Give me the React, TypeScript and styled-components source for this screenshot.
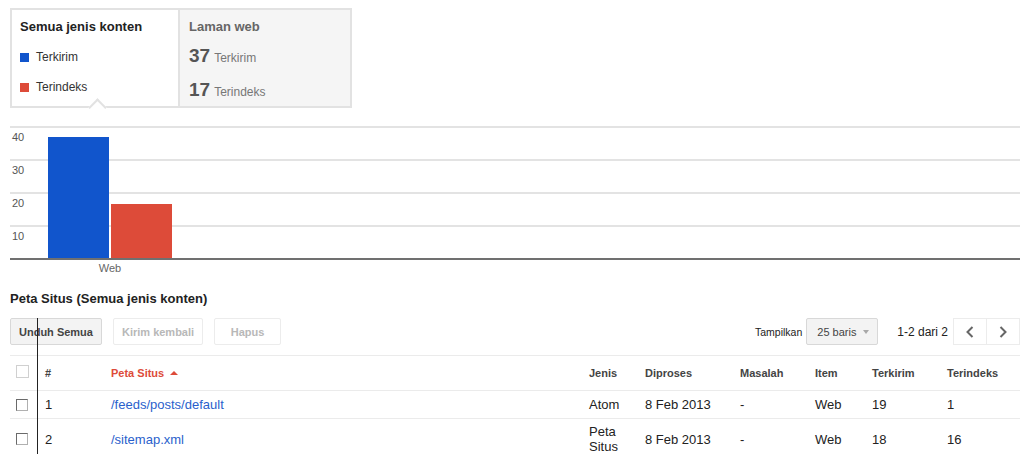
import React from 'react';
import styled, { createGlobalStyle } from 'styled-components';

const GlobalStyle = createGlobalStyle`
    body {
        margin: 0;
        background: #ffffff;
        color: #222222;
        font-family: 'Liberation Sans', Arial, sans-serif;
    }
`;

const Page = styled.div`
    position: relative;
    padding: 8px 4px 0 10px;
    height: 446px;
    overflow: hidden;
`;

const Summary = styled.div`
    display: flex;
    width: 342px;
    height: 100px;
    box-sizing: border-box;
    border: 2px solid #e2e2e2;
`;

const SummaryPanel = styled.div<{ $muted?: boolean }>`
    position: relative;
    display: flex;
    flex-direction: column;
    box-sizing: border-box;
    width: ${p => (p.$muted ? '170px' : '168px')};
    padding: 9px 0 0 ${p => (p.$muted ? '9px' : '8px')};
    background: ${p => (p.$muted ? '#f5f5f5' : '#ffffff')};
    border-right: ${p => (p.$muted ? 'none' : '2px solid #e2e2e2')};
`;

const PanelTitle = styled.div<{ $muted?: boolean }>`
    font-size: 13px;
    line-height: 16px;
    font-weight: bold;
    color: ${p => (p.$muted ? '#666666' : '#222222')};
`;

const LegendRow = styled.div`
    display: flex;
    align-items: center;
    gap: 7px;
    margin-top: 14px;
    font-size: 12px;
    line-height: 16px;
    color: #333333;
`;

const Swatch = styled.span<{ $color: string }>`
    width: 9px;
    height: 9px;
    background: ${p => p.$color};
`;

const Caret = styled.span`
    position: absolute;
    left: 79px;
    bottom: -8px;
    width: 13px;
    height: 13px;
    box-sizing: border-box;
    background: #ffffff;
    border-top: 2px solid #e2e2e2;
    border-left: 2px solid #e2e2e2;
    transform: rotate(45deg);
`;

const StatRow = styled.div<{ $first?: boolean }>`
    display: flex;
    align-items: baseline;
    gap: 4px;
    margin-top: ${p => (p.$first ? '10px' : '10px')};
    line-height: 22px;
`;

const StatNum = styled.span`
    font-size: 19px;
    font-weight: bold;
    color: #555555;
`;

const StatLabel = styled.span`
    font-size: 12px;
    color: #777777;
`;

const ChartSvg = styled.svg`
    display: block;
    margin-top: 12px;
    font-family: 'Liberation Sans', Arial, sans-serif;
`;

const SectionTitle = styled.h2`
    margin: 15px 0 0;
    font-size: 13px;
    line-height: 16px;
    font-weight: bold;
    color: #222222;
`;

const Toolbar = styled.div`
    display: flex;
    align-items: center;
    gap: 11px;
    margin-top: 11px;
    height: 27px;
`;

const Button = styled.div<{ $disabled?: boolean }>`
    display: flex;
    align-items: center;
    justify-content: center;
    box-sizing: border-box;
    height: 27px;
    min-width: 67px;
    padding: 0 8px;
    border-radius: 2px;
    font-size: 11px;
    font-weight: bold;
    color: ${p => (p.$disabled ? '#b8b8b8' : '#444444')};
    background: ${p => (p.$disabled ? '#ffffff' : '#f3f3f3')};
    border: 1px solid ${p => (p.$disabled ? '#ececec' : '#d8d8d8')};
`;

const RightTools = styled.div`
    display: flex;
    align-items: center;
    margin-left: auto;
`;

const ShowLabel = styled.span`
    font-size: 10.5px;
    color: #222222;
    margin-right: 4px;
`;

const Select = styled.div`
    display: flex;
    align-items: center;
    box-sizing: border-box;
    width: 72px;
    height: 27px;
    padding: 0 0 0 10px;
    border-radius: 2px;
    border: 1px solid #d8d8d8;
    background: #f3f3f3;
    font-size: 11px;
    color: #444444;
`;

const SelectArrow = styled.span`
    margin-left: 7px;
    border-left: 3px solid transparent;
    border-right: 3px solid transparent;
    border-top: 4px solid #a8a8a8;
`;

const PageInfo = styled.span`
    margin: 0 5px 0 19px;
    font-size: 12px;
    color: #222222;
`;

const PagerGroup = styled.div`
    display: flex;
`;

const PagerButton = styled.div`
    display: flex;
    align-items: center;
    justify-content: center;
    box-sizing: border-box;
    width: 34px;
    height: 27px;
    border: 1px solid #ececec;
    background: #ffffff;
    & + & {
        margin-left: -1px;
    }
`;

const Table = styled.table`
    margin-top: 10px;
    width: 1010px;
    table-layout: fixed;
    border-collapse: collapse;
    font-size: 13px;
    color: #222222;
    tr {
        border-top: 1px solid #ebebeb;
    }
`;

const Th = styled.th<{ $active?: boolean }>`
    height: 34px;
    padding: 0;
    text-align: left;
    vertical-align: middle;
    font-size: 11px;
    font-weight: bold;
    color: ${p => (p.$active ? '#dd4b39' : '#444444')};
`;

const Td = styled.td<{ $tall?: boolean }>`
    height: ${p => (p.$tall ? '40px' : '27px')};
    padding: 0 8px 0 0;
    vertical-align: middle;
    line-height: 15px;
`;

const CheckCell = styled.td`
    padding: 0 0 0 6px;
    vertical-align: middle;
`;

const Checkbox = styled.span<{ $light?: boolean }>`
    display: block;
    box-sizing: border-box;
    width: ${p => (p.$light ? '13px' : '12px')};
    height: ${p => (p.$light ? '13px' : '12px')};
    margin-top: ${p => (p.$light ? '-4px' : '0')};
    border: 1px solid ${p => (p.$light ? '#d0d0d0' : '#6a6a6a')};
    border-right-color: ${p => (p.$light ? '#d0d0d0' : '#b0b0b0')};
    border-bottom-color: ${p => (p.$light ? '#d0d0d0' : '#b0b0b0')};
    background: #ffffff;
`;

const SortArrow = styled.span`
    display: inline-block;
    margin-left: 6px;
    vertical-align: 2px;
    border-left: 4px solid transparent;
    border-right: 4px solid transparent;
    border-bottom: 4px solid #dd4b39;
`;

const Link = styled.a`
    color: #2a5fcc;
    text-decoration: none;
`;

const CursorLine = styled.div`
    position: absolute;
    left: 37px;
    top: 318px;
    bottom: 0;
    width: 1px;
    background: #222222;
`;

const gridValues = [40, 30, 20, 10];

const Chart: React.FC = () => (
    <ChartSvg width={1010} height={156} viewBox='0 0 1010 156'>
        {gridValues.map((v, i) => (
            <g key={v}>
                <rect x={0} y={6 + i * 33} width={1010} height={2} fill='#e3e3e3' />
                <text x={2} y={21 + i * 33} fontSize={11} fill='#555555'>{v}</text>
            </g>
        ))}
        <rect x={38} y={17} width={61} height={122} fill='#1155cc' />
        <rect x={101} y={84} width={61} height={55} fill='#dd4b39' />
        <rect x={0} y={138} width={1010} height={2} fill='#707070' />
        <text x={100} y={152} fontSize={11} fill='#666666' textAnchor='middle'>Web</text>
    </ChartSvg>
);

const Chevron: React.FC<{ left?: boolean }> = ({ left }) => (
    <svg width={10} height={14} viewBox='0 0 10 14'>
        <path
            d={left ? 'M7.5 2 L2.5 7 L7.5 12' : 'M2.5 2 L7.5 7 L2.5 12'}
            fill='none'
            stroke='#666666'
            strokeWidth={2}
        />
    </svg>
);

const rows = [
    { n: 1, path: '/feeds/posts/default', type: 'Atom', date: '8 Feb 2013', sent: 19, indexed: 1 },
    { n: 2, path: '/sitemap.xml', type: 'Peta Situs', date: '8 Feb 2013', sent: 18, indexed: 16 },
];

const colWidths = [35, 66, 478, 56, 95, 75, 57, 75, 73];

const App: React.FC = () => (
    <Page>
        <GlobalStyle />
        <Summary>
            <SummaryPanel>
                <PanelTitle>Semua jenis konten</PanelTitle>
                <LegendRow><Swatch $color='#1155cc' />Terkirim</LegendRow>
                <LegendRow><Swatch $color='#dd4b39' />Terindeks</LegendRow>
                <Caret />
            </SummaryPanel>
            <SummaryPanel $muted>
                <PanelTitle $muted>Laman web</PanelTitle>
                <StatRow $first><StatNum>37</StatNum><StatLabel>Terkirim</StatLabel></StatRow>
                <StatRow><StatNum>17</StatNum><StatLabel>Terindeks</StatLabel></StatRow>
            </SummaryPanel>
        </Summary>
        <Chart />
        <SectionTitle>Peta Situs (Semua jenis konten)</SectionTitle>
        <Toolbar>
            <Button>Unduh Semua</Button>
            <Button $disabled>Kirim kembali</Button>
            <Button $disabled>Hapus</Button>
            <RightTools>
                <ShowLabel>Tampilkan</ShowLabel>
                <Select>25 baris<SelectArrow /></Select>
                <PageInfo>1-2 dari 2</PageInfo>
                <PagerGroup>
                    <PagerButton><Chevron left /></PagerButton>
                    <PagerButton><Chevron /></PagerButton>
                </PagerGroup>
            </RightTools>
        </Toolbar>
        <Table>
            <colgroup>
                {colWidths.map((w, i) => <col key={i} style={{ width: w }} />)}
            </colgroup>
            <thead>
                <tr>
                    <CheckCell><Checkbox $light /></CheckCell>
                    <Th>#</Th>
                    <Th $active>Peta Situs<SortArrow /></Th>
                    <Th>Jenis</Th>
                    <Th>Diproses</Th>
                    <Th>Masalah</Th>
                    <Th>Item</Th>
                    <Th>Terkirim</Th>
                    <Th>Terindeks</Th>
                </tr>
            </thead>
            <tbody>
                {rows.map(r => {
                    const tall = r.type.includes(' ');
                    return (
                        <tr key={r.n}>
                            <CheckCell><Checkbox /></CheckCell>
                            <Td $tall={tall}>{r.n}</Td>
                            <Td $tall={tall}><Link href='#'>{r.path}</Link></Td>
                            <Td $tall={tall}>{r.type}</Td>
                            <Td $tall={tall}>{r.date}</Td>
                            <Td $tall={tall}>-</Td>
                            <Td $tall={tall}>Web</Td>
                            <Td $tall={tall}>{r.sent}</Td>
                            <Td $tall={tall}>{r.indexed}</Td>
                        </tr>
                    );
                })}
            </tbody>
        </Table>
        <CursorLine />
    </Page>
);

export default App;
